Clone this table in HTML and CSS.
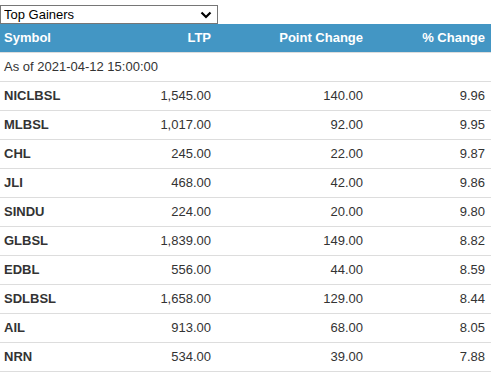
FILE: index.html
```html
<!DOCTYPE html>
<html>
<head>
<meta charset="utf-8">
<link rel="stylesheet" href="styles.css">
</head>
<body>
<div class="picker">
  <select class="picker-select">
    <option>Top Gainers</option>
    <option>Top Losers</option>
  </select>
  <svg class="picker-arrow" width="12" height="8" viewBox="0 0 12 8"><path d="M1.5 1.5 L6 6 L10.5 1.5" fill="none" stroke="#000" stroke-width="2.2"/></svg>
</div>
<table class="movers">
  <colgroup><col class="c1"><col class="c2"><col class="c3"><col class="c4"></colgroup>
  <thead>
    <tr><th class="left">Symbol</th><th>LTP</th><th>Point Change</th><th>% Change</th></tr>
  </thead>
  <tbody>
    <tr><td class="left asof" colspan="4">As of 2021-04-12 15:00:00</td></tr>
    <tr><td class="left sym">NICLBSL</td><td>1,545.00</td><td>140.00</td><td>9.96</td></tr>
    <tr><td class="left sym">MLBSL</td><td>1,017.00</td><td>92.00</td><td>9.95</td></tr>
    <tr><td class="left sym">CHL</td><td>245.00</td><td>22.00</td><td>9.87</td></tr>
    <tr><td class="left sym">JLI</td><td>468.00</td><td>42.00</td><td>9.86</td></tr>
    <tr><td class="left sym">SINDU</td><td>224.00</td><td>20.00</td><td>9.80</td></tr>
    <tr><td class="left sym">GLBSL</td><td>1,839.00</td><td>149.00</td><td>8.82</td></tr>
    <tr><td class="left sym">EDBL</td><td>556.00</td><td>44.00</td><td>8.59</td></tr>
    <tr><td class="left sym">SDLBSL</td><td>1,658.00</td><td>129.00</td><td>8.44</td></tr>
    <tr><td class="left sym">AIL</td><td>913.00</td><td>68.00</td><td>8.05</td></tr>
    <tr><td class="left sym">NRN</td><td>534.00</td><td>39.00</td><td>7.88</td></tr>
  </tbody>
</table>
</body>
</html>
```
FILE: styles.css
```css
html, body {
  margin: 0;
  padding: 0;
  background: #fff;
}
body {
  padding-top: 5px;
  font-family: "Liberation Sans", Arial, sans-serif;
  font-size: 13px;
  color: #333;
}
.picker {
  position: relative;
  width: 218px;
  height: 19px;
}
.picker-select {
  -webkit-appearance: none;
  appearance: none;
  box-sizing: border-box;
  width: 218px;
  height: 19px;
  margin: 0;
  padding: 0 0 0 3px;
  border: 1px solid #767676;
  border-radius: 0;
  background: #fff;
  color: #000;
  font-family: "Liberation Sans", Arial, sans-serif;
  font-size: 13px;
  line-height: 17px;
  display: block;
}
.picker-arrow {
  position: absolute;
  right: 6px;
  top: 6px;
  pointer-events: none;
}
.movers {
  border-collapse: collapse;
  table-layout: fixed;
  width: 491px;
}
.c1 { width: 120px; }
.c2 { width: 97px; }
.c3 { width: 152px; }
.c4 { width: 122px; }
.movers th, .movers td {
  box-sizing: border-box;
  padding: 0 6px 0 4px;
  text-align: right;
  white-space: nowrap;
}
.movers th {
  height: 28px;
  background: #4396c4;
  color: #fff;
  font-weight: bold;
  border-bottom: 1px solid #ddd;
}
.movers td {
  height: 29px;
  border-bottom: 1px solid #ddd;
}
.movers .left { text-align: left; }
.movers .sym { font-weight: bold; }
```
